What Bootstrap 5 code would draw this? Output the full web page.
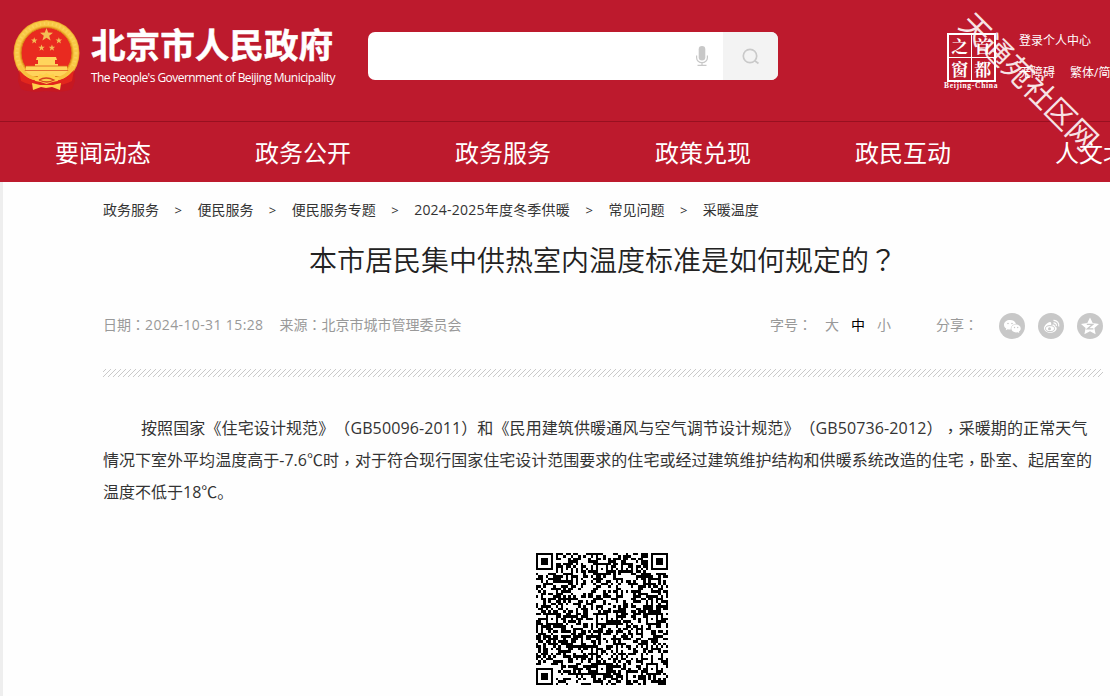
<!DOCTYPE html>
<html lang="zh-CN">
<head>
<meta charset="utf-8">
<meta name="viewport" content="width=device-width, initial-scale=1">
<title>首都之窗</title>
<link rel="stylesheet" href="https://cdn.jsdelivr.net/npm/bootstrap@5.3.0/dist/css/bootstrap.min.css">
<style>
body{font-family:"Open Sans","Noto Sans CJK SC",sans-serif;background:#fefefe;color:#333;height:696px;overflow:hidden;text-spacing-trim:space-all}
.pc{font-family:"Noto Sans CJK TC",sans-serif;line-height:0}
.comma{vertical-align:-3px}
.site-header{background:#bd1a2d;height:182px;color:#fff;overflow:hidden}
.site-top{height:121px}
.emblem{margin:19px 0 0 12px;width:69px;height:73px}
.brand-box{margin:25px 0 0 10px;width:270px;white-space:nowrap}
.brand-zh{font-size:34.6px;line-height:40px;font-weight:700;-webkit-text-stroke:.5px #fff}
.brand-en{font-size:12px;line-height:18px;margin-top:4px;letter-spacing:-.55px}
.search-box{width:410px;height:48px;margin:32px 0 0 7px;border-radius:7px;background:#fff;overflow:hidden}
.search-btn{width:55px;background:#f3f3f3;border:0}
.seal{width:56px;margin:33px 0 0 166px}
.seal-grid{width:49px;height:49px;border:2.5px solid #fff;display:grid;grid-template-columns:1fr 1fr;font:700 17px/21px "Noto Serif CJK SC","Noto Sans CJK SC",sans-serif;text-align:center;margin-left:3px}
.seal-grid span:nth-child(odd){border-right:1px solid #fff}
.seal-grid span:nth-child(-n+2){border-bottom:1px solid #fff}
.seal-en{font:700 7.5px/8px "Liberation Serif",serif;letter-spacing:.7px;white-space:nowrap}
.tools{font-size:12px;line-height:16px;margin:33px 0 0 19px;white-space:nowrap}
.site-nav{border-top:1px solid #981020;height:61px;padding-left:3px;font-size:24px}
.site-nav a{flex:0 0 200px;text-align:center;line-height:62px;color:#fff;text-decoration:none}
.watermark{position:absolute;left:939px;top:67px;width:180px;text-align:center;font-size:30px;line-height:30px;color:#fff;opacity:.88;transform:rotate(45deg);white-space:nowrap}
.page-body{border-left:3px solid #eee;padding-left:100px;height:514px}
.article{width:1000px}
.crumbs{font-size:14px;line-height:20px;padding-top:18px;white-space:nowrap}
.crumbs i{font-style:normal;font-size:13px;width:38.4px;text-align:center;display:inline-block}
.year{letter-spacing:.22px}
.article h1{font-size:28px;line-height:40px;font-weight:350;margin:20px 0 0;text-align:center;color:#222}
.meta{font-size:14px;line-height:20px;margin-top:35px;color:#999;height:20px}
.stamp{letter-spacing:.38px}
.hatch{height:8px;margin-top:34px}
.body-text{font-size:16px;line-height:32px;margin-top:35px;white-space:nowrap}
.body-text div{height:32px}
.share{width:26px;height:26px;margin-top:1px}
.qr{display:block;margin:45px 0 0 433px}
</style>
</head>
<body>
<header class="site-header position-relative">
  <div class="site-top d-flex align-items-start">
    <svg class="emblem flex-shrink-0" viewBox="0 0 69 73">
      <path d="M7 45L6 62L9 70Q18 74 34 72Q52 74 60 70L63 62L62 45Z" fill="#c61821"/>
      <circle cx="34.5" cy="34" r="33" fill="#f0ad2d"/><circle cx="34.5" cy="34" r="29.5" fill="none" stroke="#f8c846" stroke-width="5"/><circle cx="34.5" cy="34" r="29.500" fill="none" stroke="#fbd258" stroke-width="3" stroke-dasharray="1.500 2.500"/>
      <circle cx="34.5" cy="34" r="25.5" fill="#e92a20" stroke="#d98a1a"/>
      <g fill="#f3bd55"><path id="st" d="M34.5 9l1.700 4.500 4.800.2-3.800 3 1.400 4.700-4.100-2.700-4.100 2.700 1.400-4.700-3.800-3 4.800-.2z"/>
      <use href="#st" transform="translate(5 13.7) scale(.5)"/><use href="#st" transform="translate(29.6 13.7) scale(.5)"/><use href="#st" transform="translate(12.300 21) scale(.5)"/><use href="#st" transform="translate(22.700 21) scale(.5)"/></g>
      <path d="M24 41l1-3h19l1 3zM26 41h17v4H26zM23 45h23v2h9v4H14v-4h9zM11 51h47L53 57H16z" fill="#ffd45c"/>
      <path d="M14 47h41M11.500 51.500h46" stroke="#dd5a20" stroke-width=".8"/>
      <path d="M7 51Q19 65 34 61Q50 65 62 51L60 62Q49 68 34 67Q20 68 9 62Z" fill="#e2261d"/>
      <path d="M8 47Q15 61 30 60M61 47Q54 61 39 60" fill="none" stroke="#f8c23f" stroke-width="3"/>
      <g fill="#ffd04a"><path d="M34.500 54l3 2 4-1 2 3 4 1-2 3-5 1-6 2-6-2-5-1-2-3 4-1 2-3 4 1z"/><path d="M20 64l8 2h13l8-2-1 7-8-3-6 1-5-1-8 3z"/></g>
      <path d="M27 61q7-4 15 0q-7 4-15 0" fill="none" stroke="#d54120" stroke-width="1.3"/>
    </svg>
    <div class="brand-box flex-shrink-0"><div class="brand-zh">北京市人民政府</div><div class="brand-en">The People's Government of Beijing Municipality</div></div>
    <div class="search-box d-flex justify-content-end flex-shrink-0">
      <svg class="align-self-center me-3" width="12" height="20" viewBox="0 0 12 20" style="transform:translateX(1px)"><rect x="2.7" y="0" width="6.6" height="14.5" rx="3.3" fill="#c8c8c8"/><path d="M.6 9.5v2.2a5.4 5 0 0 0 10.8 0V9.5M6 17v2M1.5 19.3h9" fill="none" stroke="#c8c8c8" stroke-width="1.2"/></svg>
      <button class="search-btn p-0 pb-1" aria-label="搜索"><svg width="18" height="18" viewBox="0 0 18 18" fill="none" stroke="#c9c9c9" stroke-width="1.7"><circle cx="8" cy="9" r="6.700"/><path d="M12.800 13.800l3.700 2.700"/></svg></button>
    </div>
    <div class="seal flex-shrink-0"><div class="seal-grid"><span>之</span><span>首</span><span>窗</span><span>都</span></div><div class="seal-en">Beijing-China</div></div>
    <div class="tools"><div>登录个人中心</div><div class="d-flex mt-3"><span>无障碍</span><span style="margin-left:15px">繁体/简体</span></div></div>
  </div>
  <nav class="site-nav d-flex"><a href="#">要闻动态</a><a href="#">政务公开</a><a href="#">政务服务</a><a href="#">政策兑现</a><a href="#">政民互动</a><a href="#">人文北京</a></nav>
  <div class="watermark">天通苑社区网</div>
</header>
<main class="page-body"><div class="article">
  <div class="crumbs">政务服务<i>&gt;</i>便民服务<i>&gt;</i>便民服务专题<i>&gt;</i><span class="year">2024-2025年度冬季供暖</span><i>&gt;</i>常见问题<i>&gt;</i>采暖温度</div>
  <h1>本市居民集中供热室内温度标准是如何规定的<span class="pc" lang="zh-TW">？</span></h1>
  <div class="meta d-flex align-items-center"><span>日期<span class="pc" lang="zh-TW">：</span><span class="stamp">2024-10-31 15:28</span></span><span class="ms-3">来源<span class="pc" lang="zh-TW">：</span>北京市城市管理委员会</span>
    <div class="ms-auto d-flex align-items-center"><span style="margin-right:13px">字号<span class="pc" lang="zh-TW">：</span></span><span>大</span><span class="text-black" style="margin:0 12px">中</span><span>小</span><span style="margin:0 21px 0 45px">分享<span class="pc" lang="zh-TW">：</span></span>
    <div class="d-flex" style="gap:13px">
      <svg class="share" viewBox="0 0 26 26"><circle cx="13" cy="13" r="13" fill="#c8c8c8"/><path d="M11 7c-3.4 0-6 2.1-6 4.8 0 1.6.8 2.9 2.2 3.7l-.5 1.8 2.1-1.1c1 .3 2 .3 3 .2-.3-3.2 2.2-5.3 5.2-5.2C16.600 8.600 14 7 11 7z" fill="#fff"/><path d="M17 11.600c-2.700 0-4.700 1.700-4.700 3.900s2.100 3.900 4.700 3.900l1.600-.2 1.700.9-.4-1.500c1.200-.8 1.800-1.900 1.800-3.100 0-2.200-2-3.900-4.700-3.900z" fill="#fff"/><g fill="#c8c8c8"><circle cx="9" cy="10.500" r=".8"/><circle cx="13" cy="10.500" r=".8"/><circle cx="15.500" cy="14.500" r=".7"/><circle cx="18.700" cy="14.500" r=".7"/></g></svg>
      <svg class="share" viewBox="0 0 26 26"><circle cx="13" cy="13" r="13" fill="#c8c8c8"/><path d="M12 9c-2.500.3-6 3.500-6 6.300C6 18 9 19.800 12.200 19.800c3.700 0 6.500-2.100 6.500-4.300 0-1.400-1-2-2-2.300.5-1.400-.4-2.500-3.600-1.200C13.500 10.500 13.300 9 12 9z" fill="#fff"/><ellipse cx="12" cy="15.600" rx="4.500" ry="3" fill="none" stroke="#c8c8c8"/><circle cx="11.500" cy="15.700" r="1.500" fill="#c8c8c8"/><path d="M15.500 7.300a5 5 0 0 1 5.200 6.200M15.500 9.800a2.600 2.600 0 0 1 2.800 3.200" fill="none" stroke="#fff" stroke-width="1.200"/></svg>
      <svg class="share" viewBox="0 0 26 26"><circle cx="13" cy="13" r="13" fill="#c8c8c8"/><path d="M13 4.500l2.700 5.600 6.300.8-4.600 4.200 1.200 6.200-5.600-3-5.600 3 1.200-6.200L4 10.900l6.300-.8z" fill="#fff"/><path d="M9.800 11.300h6l-5.400 4.600h6" fill="none" stroke="#c8c8c8" stroke-width="1.300"/></svg>
    </div></div>
  </div>
  <svg class="hatch d-block" width="1000" height="8"><defs><pattern id="hp" width="5" height="8" patternUnits="userSpaceOnUse"><path d="M-5 8L3 0M0 8L8 0M-10 8L-2 0" stroke="#bbb" stroke-width=".8"/></pattern></defs><rect width="1000" height="8" fill="url(#hp)"/></svg>
  <div class="body-text"><div style="padding-left:38px;letter-spacing:.11px">按照国家《住宅设计规范》（GB50096-2011）和《民用建筑供暖通风与空气调节设计规范》（GB50736-2012）<span class="pc comma" lang="zh-TW">，</span>采暖期的正常天气</div><div style="letter-spacing:.02px">情况下室外平均温度高于-7.6℃时<span class="pc comma" lang="zh-TW">，</span>对于符合现行国家住宅设计范围要求的住宅或经过建筑维护结构和供暖系统改造的住宅<span class="pc comma" lang="zh-TW">，</span>卧室、起居室的</div><div>温度不低于18℃。</div></div>
  <svg class="qr" width="132" height="132" viewBox="0 0 53 53" shape-rendering="crispEdges"><path id="qr-cells"/></svg>
</div></main>
<script src="https://cdn.jsdelivr.net/npm/bootstrap@5.3.0/dist/js/bootstrap.bundle.min.js"></script>
<script>
// 53 x 53 code: finders, alignment squares, timing lines, then data cells
var n=53,s=20241031,d='';
function ring(x,y,cx,cy){return Math.max(Math.abs(x-cx),Math.abs(y-cy));}
for(var y=0;y<n;y++)for(var x=0;x<n;x++){
  s=(s*1103515245+12345)%2147483648;
  var on=(s/65536&1)===1;
  if(x===6||y===6)on=(x+y)%2===0;
  [[26,6],[6,26],[26,26],[46,26],[26,46],[46,46]].forEach(function(p){var r=ring(x,y,p[0],p[1]);if(r<3)on=r!==1;});
  [[3,3],[49,3],[3,49]].forEach(function(p){var r=ring(x,y,p[0],p[1]);if(r<5)on=r<2||r===3;});
  if(on)d+='M'+x+' '+y+'h1v1h-1z';
}
document.getElementById('qr-cells').setAttribute('d',d);
</script>
</body>
</html>
